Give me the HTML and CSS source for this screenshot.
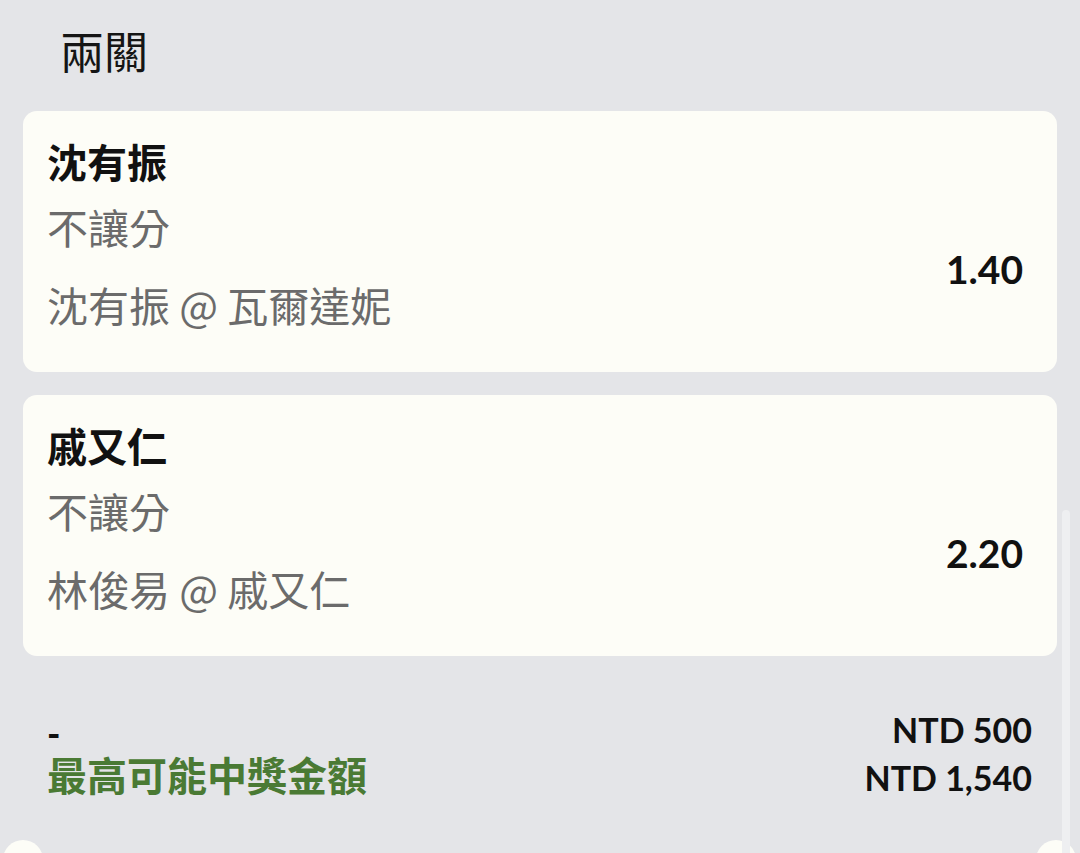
FILE: index.html
```
<!DOCTYPE html>
<html lang="zh-Hant">
<head>
    <meta charset="UTF-8">
    <meta name="viewport" content="width=device-width, initial-scale=1.0">
    <title>兩關</title>
    <link rel="stylesheet" href="styles.css">
</head>
<body>

    <!-- Bet slip -->
    <div id="slip">
        <h1 class="slip-title">兩關</h1>

        <div class="leg">
            <div class="leg-name">沈有振</div>
            <div class="leg-body">
                <div class="leg-info">
                    <p class="leg-market">不讓分</p>
                    <p class="leg-event">沈有振 @ 瓦爾達妮</p>
                </div>
                <div class="leg-odds">1.40</div>
            </div>
        </div>

        <div class="leg">
            <div class="leg-name">戚又仁</div>
            <div class="leg-body">
                <div class="leg-info">
                    <p class="leg-market">不讓分</p>
                    <p class="leg-event">林俊易 @ 戚又仁</p>
                </div>
                <div class="leg-odds">2.20</div>
            </div>
        </div>

        <div class="summary">
            <div class="summary-row">
                <span class="summary-label dash">-</span>
                <span class="summary-value">NTD 500</span>
            </div>
            <div class="summary-row">
                <span class="summary-label win">最高可能中獎金額</span>
                <span class="summary-value">NTD 1,540</span>
            </div>
        </div>
    </div>

    <!-- Ticket notches and scroll thumb -->
    <div class="notch notch-left"></div>
    <div class="notch notch-right"></div>
    <div class="scroll-thumb"></div>

</body>
</html>
```

FILE: styles.css
```
/* General styles */
body {
    font-family: Lato, "Noto Sans CJK TC", sans-serif;
    margin: 0;
    padding: 0;
    background-color: #e4e5e8;
    color: #111;
    overflow: hidden;
    height: 853px;
    position: relative;
}

#slip {
    padding: 26px 23px 0 23px;
}

.slip-title {
    margin: 0 0 32px 37px;
    font-size: 44px;
    line-height: 53px;
    font-weight: 400;
    color: #151515;
}

/* Leg cards */
.leg {
    background-color: #fdfdf7;
    border-radius: 14px;
    padding: 28px 34px 44px 24px;
    margin-bottom: 23px;
}

.leg-name {
    font-size: 40px;
    line-height: 48px;
    font-weight: 700;
    color: #111;
}

.leg-body {
    display: flex;
    justify-content: space-between;
    align-items: center;
    margin-top: 15px;
}

.leg-info p {
    margin: 0;
    font-family: "Noto Sans CJK TC", sans-serif;
    font-size: 41px;
    line-height: 48px;
    color: #6b6b6b;
}

.leg-info .leg-event {
    margin-top: 30px;
}

.leg-odds {
    padding-top: 8px;
    font-size: 39px;
    font-weight: 700;
    color: #111;
}

/* Summary */
.summary {
    margin-top: 50px;
    padding: 0 25px 0 24px;
}

.summary-row {
    display: flex;
    justify-content: space-between;
    align-items: baseline;
    line-height: 46px;
}

.summary-label {
    font-size: 34px;
    font-weight: 700;
}

.summary-label.dash {
    position: relative;
    top: 4px;
    font-size: 36px;
    font-weight: 900;
}

.summary-label.win {
    font-size: 40px;
    color: #4a7a34;
}

.summary-value {
    font-size: 34px;
    font-weight: 700;
    color: #111;
}

/* Overlays */
.notch {
    position: absolute;
    top: 840px;
    width: 40px;
    height: 40px;
    border-radius: 50%;
    background-color: #fdfdf7;
}

.notch-left {
    left: 3px;
}

.notch-right {
    left: 1036px;
}

.scroll-thumb {
    position: absolute;
    top: 510px;
    left: 1062px;
    width: 8px;
    height: 343px;
    border-radius: 4px 4px 0 0;
    background-color: #eeeff1;
}
```
